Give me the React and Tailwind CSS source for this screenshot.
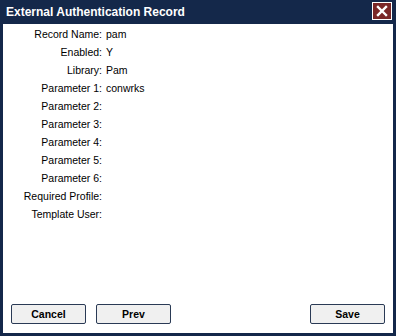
import React from 'react'

const rows = [
    ['Record Name:', 'pam'],
    ['Enabled:', 'Y'],
    ['Library:', 'Pam'],
    ['Parameter 1:', 'conwrks'],
    ['Parameter 2:', ''],
    ['Parameter 3:', ''],
    ['Parameter 4:', ''],
    ['Parameter 5:', ''],
    ['Parameter 6:', ''],
    ['Required Profile:', ''],
    ['Template User:', ''],
]

const Button = ({ children }) => (
    <button className="block w-[75px] h-[20px] bg-[#f0f0f0] border border-[#2a3a55] rounded-[2px] text-[10.5px] leading-none font-bold text-black">
        {children}
    </button>
)

export default function App() {
    return (
        <div className="w-[396px] h-[336px] bg-[#14284a] flex flex-col font-['Liberation_Sans',Arial,sans-serif]">
            {/* Title bar */}
            <div className="h-[24px] flex items-center justify-between pl-[6px] pr-[4px] shrink-0">
                <span className="text-white font-bold text-[12px] leading-none">External Authentication Record</span>
                <button className="w-[20px] h-[18px] bg-[#7a2626] border border-white flex items-center justify-center mt-[-3px]">
                    <svg width="12" height="12" viewBox="0 0 12 12">
                        <path d="M2 2 L10 10 M10 2 L2 10" stroke="white" strokeWidth="2.4" strokeLinecap="square" />
                    </svg>
                </button>
            </div>

            {/* Body */}
            <div className="flex-1 bg-white mx-[3px] mb-[3px] flex flex-col">
                <div className="pt-[2px] flex flex-col">
                    {rows.map(([label, value]) => (
                        <div key={label} className="flex h-[18px] items-center text-[10.5px] text-black">
                            <span className="w-[99px] text-right">{label}</span>
                            <span className="ml-[4px]">{value}</span>
                        </div>
                    ))}
                </div>

                <div className="mt-auto flex items-center px-[8px] pb-[9px]">
                    <div className="flex gap-[10px]">
                        <Button>Cancel</Button>
                        <Button>Prev</Button>
                    </div>
                    <div className="ml-auto flex">
                        <Button>Save</Button>
                    </div>
                </div>
            </div>
        </div>
    )
}
